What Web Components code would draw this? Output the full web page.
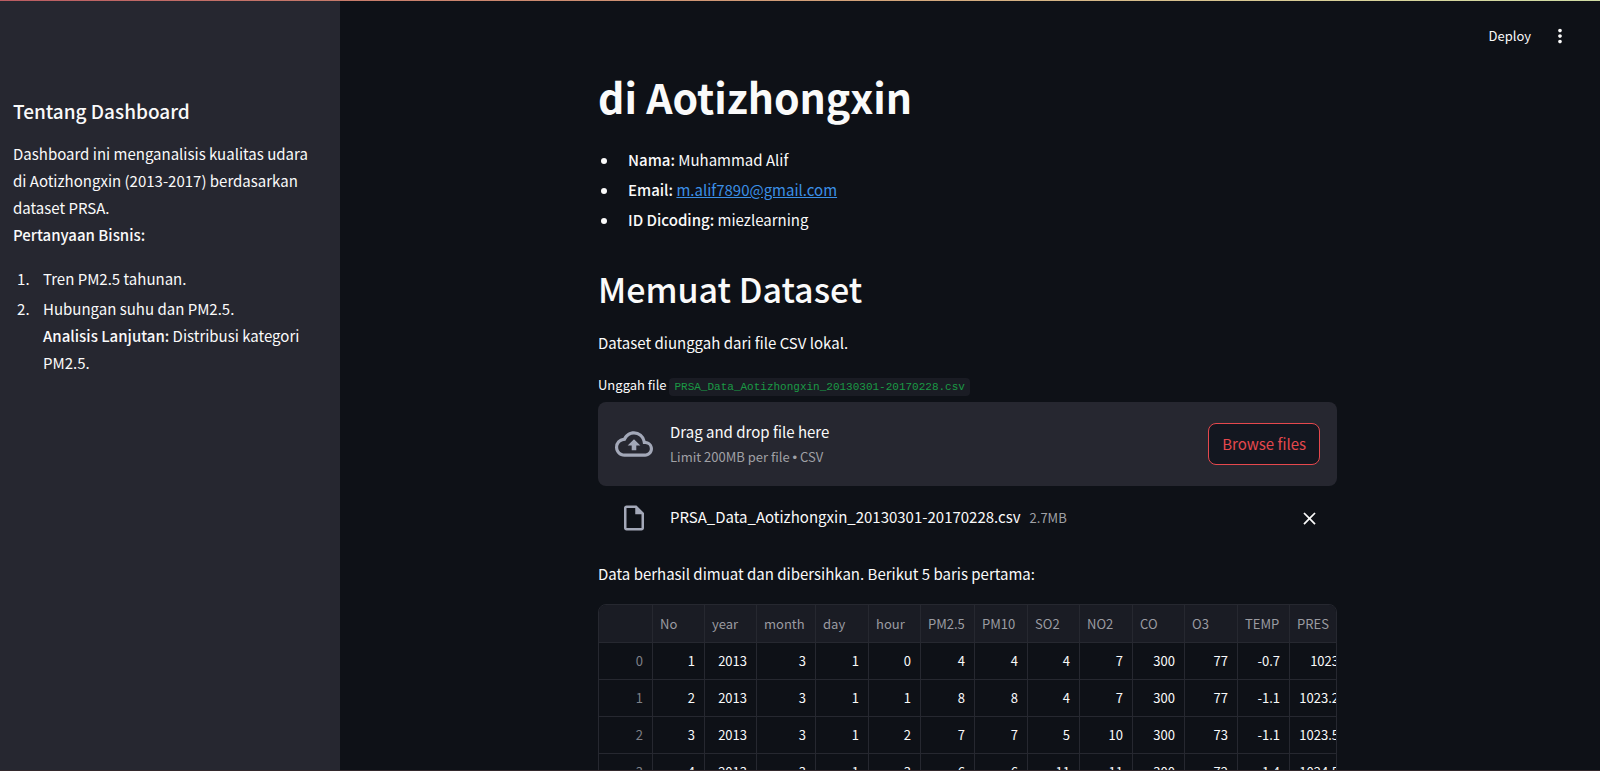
<!DOCTYPE html>
<html lang="id">
<head>
<meta charset="utf-8">
<title>Dashboard Kualitas Udara</title>
<style>
  html, body { height: 100%; margin: 0; }
  body {
    background: #0e1117;
    color: #fafafa;
    font-family: "Noto Sans CJK SC", "Noto Sans", sans-serif;
    font-size: 15px;
    line-height: 27px;
    overflow: hidden;
  }
</style>
</head>
<body>
<dash-app>
  <dash-sidebar slot="sidebar"></dash-sidebar>
  <dash-toolbar slot="toolbar"></dash-toolbar>
  <dash-profile></dash-profile>
  <dash-section heading="Memuat Dataset">Dataset diunggah dari file CSV lokal.</dash-section>
  <file-uploader filename="PRSA_Data_Aotizhongxin_20130301-20170228.csv" size="2.7MB"></file-uploader>
  <dash-note>Data berhasil dimuat dan dibersihkan. Berikut 5 baris pertama:</dash-note>
  <data-frame></data-frame>
</dash-app>

<script>
function define(name, markup, setup) {
  customElements.define(name, class extends HTMLElement {
    constructor() {
      super();
      this.attachShadow({ mode: 'open' }).innerHTML = markup;
    }
    connectedCallback() { if (setup) setup(this, this.shadowRoot); }
  });
}

define('dash-app', `
  <style>
    :host { display: grid; grid-template-columns: 340px minmax(0, 1fr); grid-template-rows: 1px minmax(0, 1fr) 1px; height: 100vh; }
    .top { grid-column: 1 / -1; background: linear-gradient(to right, #bb5c62, #c9806c 25%, #d3a47a 55%, #d8d29a 85%, #cfdca4); }
    .bottom { grid-column: 1 / -1; background: #33292d; }
    aside { background: #262730; overflow: hidden; }
    main { overflow: hidden; padding-right: 5px; }
    .block { max-width: 739px; margin: 0 auto; }
  </style>
  <div class="top"></div>
  <aside><slot name="sidebar"></slot></aside>
  <main>
    <slot name="toolbar"></slot>
    <div class="block"><slot></slot></div>
  </main>
  <div class="bottom"></div>`);

define('dash-toolbar', `
  <style>
    :host { display: flex; justify-content: flex-end; align-items: center; gap: 18px; height: 70px; padding-right: 24px; }
    button { border: 0; padding: 0; background: none; color: inherit; font: inherit; font-size: 13px; line-height: 22px; display: block; }
    svg { display: block; width: 22px; height: 22px; fill: currentColor; }
  </style>
  <button type="button">Deploy</button>
  <button type="button" aria-label="Menu utama">
    <svg viewBox="0 0 24 24"><path d="M12 8c1.1 0 2-.9 2-2s-.9-2-2-2-2 .9-2 2 .9 2 2 2zm0 2c-1.1 0-2 .9-2 2s.9 2 2 2 2-.9 2-2-.9-2-2-2zm0 6c-1.1 0-2 .9-2 2s.9 2 2 2 2-.9 2-2-.9-2-2-2z"/></svg>
  </button>`);

define('dash-sidebar', `
  <style>
    :host { display: block; padding: 96px 24px 24px 13px; }
    h3 { margin: 0 0 16px; font-size: 19px; line-height: 27px; font-weight: 500; }
    p { margin: 0 0 17px; }
    ol { margin: 0; padding: 0 0 0 30px; }
    li::marker { content: counter(list-item) ".\\a0\\a0\\a0\\a0"; }
    li + li { margin-top: 3px; }
    b { font-weight: 500; }
  </style>
  <h3>Tentang Dashboard</h3>
  <p>Dashboard ini menganalisis kualitas udara di Aotizhongxin (2013-2017) berdasarkan dataset PRSA.<br><b>Pertanyaan Bisnis:</b></p>
  <ol>
    <li>Tren PM2.5 tahunan.</li>
    <li>Hubungan suhu dan PM2.5.<br><b>Analisis Lanjutan:</b> Distribusi kategori PM2.5.</li>
  </ol>`);

define('dash-profile', `
  <style>
    :host { display: block; margin-top: -2px; }
    h1 { margin: 0 0 22px; font-size: 41px; line-height: 55px; font-weight: 700; }
    ul { margin: 0; padding: 0 0 0 30px; list-style: none; }
    li::before { content: ""; display: inline-block; width: 6px; height: 6px; margin: 0 21px 2px -27px; border-radius: 50%; background: currentColor; vertical-align: middle; }
    li + li { margin-top: 3px; }
    b { font-weight: 500; }
    a { color: #3b8fe6; }
  </style>
  <h1>di Aotizhongxin</h1>
  <ul>
    <li><b>Nama:</b> Muhammad Alif</li>
    <li><b>Email:</b> <a href="mailto:m.alif7890@gmail.com">m.alif7890@gmail.com</a></li>
    <li><b>ID Dicoding:</b> miezlearning</li>
  </ul>`);

define('dash-section', `
  <style>
    :host { display: block; margin-top: 33px; }
    h2 { margin: 0 0 17px; font-size: 34px; line-height: 46px; font-weight: 500; }
    p { margin: 0; }
  </style>
  <h2></h2>
  <p><slot></slot></p>`,
  (el, root) => { root.querySelector('h2').textContent = el.getAttribute('heading'); });

define('file-uploader', `
  <style>
    :host { display: block; margin-top: 16px; }
    label { display: block; font-size: 13px; line-height: 26px; margin-bottom: 2px; }
    code { font-family: "Liberation Mono", monospace; font-size: 11px; color: #1a9a45; background: #1a1c24; border-radius: 4px; padding: 3px 5px; }
    input { display: none; }
    .drop { display: flex; align-items: center; gap: 17px; padding: 16px 17px; border-radius: 8px; background: #262730; }
    .drop svg { width: 38px; height: 38px; }
    svg { display: block; flex: none; fill: #a3a8b8; }
    .text { flex: 1; }
    .small { font-size: 13px; line-height: 24px; color: #a0a1a6; }
    .dot { font-family: "Liberation Sans", sans-serif; }
    .browse { height: 42px; box-sizing: border-box; padding: 0 13px; border: 1px solid #e5484d; border-radius: 8px; background: #131720; color: #e5484d; font: inherit; line-height: 24px; }
    .file { display: flex; align-items: center; padding: 17px 17px 0; }
    .doc { width: 30px; height: 30px; margin: 0 21px 0 4px; }
    .file .name { line-height: 24px; padding-bottom: 2px; }
    .file .small { flex: 1; margin-left: 9px; }
    .remove { border: 0; background: none; padding: 0; }
    .remove svg { width: 21px; height: 21px; fill: #fafafa; }
  </style>
  <label for="file">Unggah file <code></code></label>
  <input id="file" type="file" accept=".csv">
  <div class="drop">
    <svg viewBox="0 0 24 24"><path d="M19.35 10.04A7.49 7.49 0 0012 4C9.11 4 6.6 5.64 5.35 8.04A5.994 5.994 0 000 14c0 3.31 2.69 6 6 6h13c2.76 0 5-2.24 5-5 0-2.64-2.05-4.78-4.65-4.96zM19 18H6c-2.21 0-4-1.79-4-4 0-2.05 1.53-3.76 3.56-3.97l1.07-.11.5-.95A5.469 5.469 0 0112 6c2.62 0 4.88 1.86 5.39 4.43l.3 1.5 1.53.11A2.98 2.98 0 0122 15c0 1.65-1.35 3-3 3zM8 13h2.55v3h2.9v-3H16l-4-4z"/></svg>
    <div class="text">
      <div>Drag and drop file here</div>
      <div class="small">Limit 200MB per file <span class="dot">•</span> CSV</div>
    </div>
    <button class="browse" type="button">Browse files</button>
  </div>
  <div class="file">
    <svg class="doc" viewBox="0 0 24 24"><path d="M14 2H6c-1.1 0-2 .9-2 2v16c0 1.1.9 2 2 2h12c1.1 0 2-.9 2-2V8l-6-6zM6 20V4h7v5h5v11H6z"/></svg>
    <span class="name"></span>
    <span class="small size"></span>
    <button class="remove" type="button" aria-label="Hapus file">
      <svg viewBox="0 0 24 24"><path d="M19 6.41L17.59 5 12 10.59 6.41 5 5 6.41 10.59 12 5 17.59 6.41 19 12 13.41 17.59 19 19 17.59 13.41 12z"/></svg>
    </button>
  </div>`,
  (el, root) => {
    root.querySelector('code').textContent = el.getAttribute('filename');
    root.querySelector('.name').textContent = el.getAttribute('filename');
    root.querySelector('.size').textContent = el.getAttribute('size');
    root.querySelector('.browse').onclick = () => root.querySelector('input').click();
  });

define('dash-note', `
  <style>:host { display: block; margin: 27px 0 17px; }</style>
  <slot></slot>`);

define('data-frame', `
  <style>
    :host { display: block; box-sizing: border-box; border: 1px solid #262830; border-radius: 8px; overflow: hidden; }
    table { border-collapse: separate; border-spacing: 0; table-layout: fixed; width: 750px; font-size: 13px; line-height: 20px; }
    th, td { box-sizing: border-box; height: 37px; border-right: 1px solid #262830; border-bottom: 1px solid #262830; font-weight: 400; white-space: nowrap; }
    th { text-align: left; padding: 0 0 0 7px; background: #1a1c24; color: #9a9ba1; }
    thead th { height: 38px; }
    td, tbody th { text-align: right; padding: 0 9px 0 0; }
    tbody th { background: none; color: #7e8087; }
  </style>
  <table><colgroup></colgroup><thead><tr></tr></thead><tbody></tbody></table>`,
  (el, root) => {
    const cols = [['', 54], ['No', 52], ['year', 52], ['month', 59], ['day', 53], ['hour', 52], ['PM2.5', 54],
      ['PM10', 53], ['SO2', 52], ['NO2', 53], ['CO', 52], ['O3', 53], ['TEMP', 52], ['PRES', 59]];
    const rows = [
      [0, 1, 2013, 3, 1, 0, 4, 4, 4, 7, 300, 77, '-0.7', '1023'],
      [1, 2, 2013, 3, 1, 1, 8, 8, 4, 7, 300, 77, '-1.1', '1023.2'],
      [2, 3, 2013, 3, 1, 2, 7, 7, 5, 10, 300, 73, '-1.1', '1023.5'],
      [3, 4, 2013, 3, 1, 3, 6, 6, 11, 11, 300, 72, '-1.4', '1024.5'],
      [4, 5, 2013, 3, 1, 4, 3, 3, 12, 12, 300, 72, '-2', '1025.2']
    ];
    root.querySelector('colgroup').innerHTML = cols.map(c => `<col style="width:${c[1]}px">`).join('');
    root.querySelector('thead tr').innerHTML = cols.map(c => `<th scope="col">${c[0]}</th>`).join('');
    root.querySelector('tbody').innerHTML = rows.map(r =>
      '<tr>' + r.map((v, i) => i ? `<td>${v}</td>` : `<th scope="row">${v}</th>`).join('') + '</tr>').join('');
  });
</script>
</body>
</html>
